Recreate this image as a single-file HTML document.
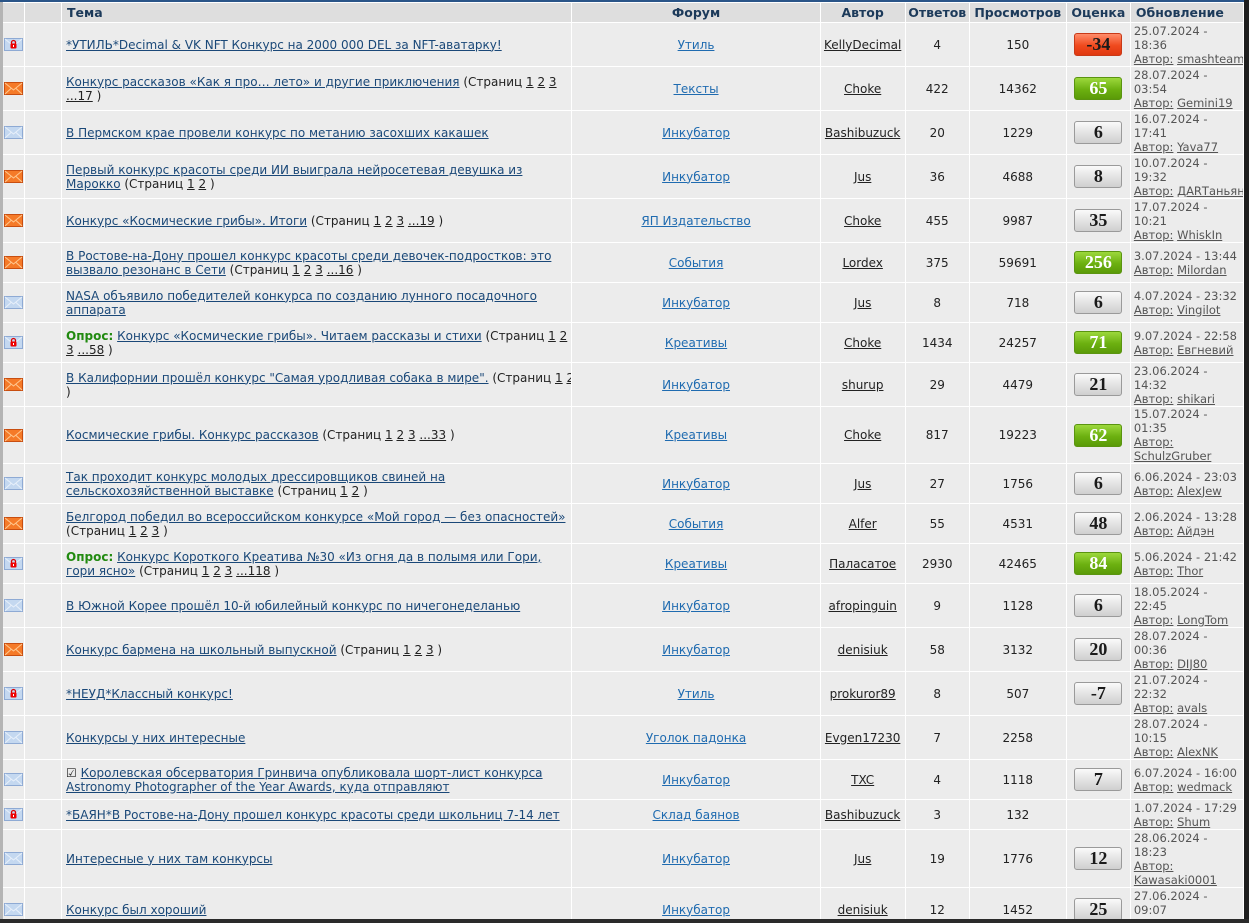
<!DOCTYPE html>
<html><head><meta charset="utf-8"><style>
html,body{margin:0;padding:0;background:#1e1e1e;width:1249px;height:923px;overflow:hidden}
#w{position:absolute;left:0;top:0;width:1244px;height:919px;background:#ececec;border-top:2px solid #2a5588;box-sizing:border-box;overflow:hidden}
table{position:absolute;left:0;top:0;width:1244px;border-collapse:collapse;table-layout:fixed;font-family:"DejaVu Sans","Liberation Sans",sans-serif;font-size:12px;color:#222;border-left:3px solid #b4b4b4}
td,th{border:1px solid #fff;padding:0;vertical-align:middle;white-space:nowrap;overflow:hidden;line-height:14px}
th{background:#dedede;color:#1c3a5a;font-weight:bold;font-size:12.5px;height:19px;text-align:center}
th.t{text-align:left;padding-left:5px}
td{background:#ececec;text-align:center}
td.t{text-align:left;padding-left:4px}
td.u{text-align:left;color:#555;font-size:11.5px;padding-left:3px}
a{color:#222;text-decoration:underline}
a.tp{color:#1a4878}
a.fm{color:#1f6bb0}
td.u a{color:#555}
.op{color:#218a10;font-weight:bold}
.b{display:inline-block;width:48px;height:23px;line-height:23px;border-radius:3px;font:bold 18px "Liberation Serif","DejaVu Serif",serif;text-align:center;box-sizing:border-box}
.r{background:linear-gradient(#ff8c6a,#f04a1e 55%,#e03810);border:1px solid #c83a18;color:#1a1a1a}
.g{background:linear-gradient(#9cd83c,#6cb010 55%,#5a9a08);border:1px solid #5a9410;color:#fff}
.n{background:linear-gradient(#fafafa,#e2e2e2 55%,#cfcfcf);border:1px solid #9a9a9a;color:#1a1a1a}
svg{display:block;margin:0 auto}
</style></head><body><div id="w">
<svg width="0" height="0" style="position:absolute"><defs>
<symbol id="bl" viewBox="0 0 19 13"><rect x=".5" y=".5" width="18" height="12" fill="#c4d8f0" stroke="#8eaad4"/><path d="M1 1L9.5 8L18 1M1 12L7 6.5M18 12L12 6.5" fill="none" stroke="#e8f0fa" stroke-width="1"/></symbol>
<symbol id="or" viewBox="0 0 19 13"><rect x=".5" y=".5" width="18" height="12" fill="#f57a28" stroke="#c84e10"/><path d="M1 1L9.5 8L18 1M1 12L7 6.5M18 12L12 6.5" fill="none" stroke="#ffc890" stroke-width="1"/></symbol>
<symbol id="lk" viewBox="0 0 19 13"><rect x=".5" y=".5" width="18" height="12" fill="#c4d8f0" stroke="#8eaad4"/><path d="M1 1L9.5 8L18 1" fill="none" stroke="#e8f0fa"/><path d="M7.5 6V4.5a2 2 0 0 1 4 0V6" fill="none" stroke="#d00" stroke-width="1.3"/><rect x="6.5" y="5.5" width="6" height="5" rx="1" fill="#e00"/><rect x="9" y="7" width="1" height="2" fill="#fff"/></symbol>
</defs></svg>
<table>
<colgroup><col style="width:23px"><col style="width:37px"><col style="width:510px"><col style="width:248px"><col style="width:85px"><col style="width:64px"><col style="width:97px"><col style="width:64px"><col style="width:113px"></colgroup>
<tr><th></th><th></th><th class="t">Тема</th><th>Форум</th><th>Автор</th><th>Ответов</th><th>Просмотров</th><th>Оценка</th><th class="t">Обновление</th></tr>
<tr style="height:44px"><td><svg width="19" height="13"><use href="#lk"/></svg></td><td></td><td class="t"><a class="tp">*УТИЛЬ*Decimal &amp; VK NFT Конкурс на 2000 000 DEL за NFT-аватарку!</a></td><td><a class="fm">Утиль</a></td><td><a>KellyDecimal</a></td><td>4</td><td>150</td><td><span class="b r">-34</span></td><td class="u">25.07.2024 -<br>18:36<br><a>Автор:</a> <a>smashteam</a></td></tr>
<tr style="height:44px"><td><svg width="19" height="13"><use href="#or"/></svg></td><td></td><td class="t"><a class="tp">Конкурс рассказов «Как я про… лето» и другие приключения</a> (Страниц <a>1</a> <a>2</a> <a>3</a><br><a>...17</a> )</td><td><a class="fm">Тексты</a></td><td><a>Choke</a></td><td>422</td><td>14362</td><td><span class="b g">65</span></td><td class="u">28.07.2024 -<br>03:54<br><a>Автор:</a> <a>Gemini19</a></td></tr>
<tr style="height:44px"><td><svg width="19" height="13"><use href="#bl"/></svg></td><td></td><td class="t"><a class="tp">В Пермском крае провели конкурс по метанию засохших какашек</a></td><td><a class="fm">Инкубатор</a></td><td><a>Bashibuzuck</a></td><td>20</td><td>1229</td><td><span class="b n">6</span></td><td class="u">16.07.2024 -<br>17:41<br><a>Автор:</a> <a>Yava77</a></td></tr>
<tr style="height:44px"><td><svg width="19" height="13"><use href="#or"/></svg></td><td></td><td class="t"><a class="tp">Первый конкурс красоты среди ИИ выиграла нейросетевая девушка из<br>Марокко</a> (Страниц <a>1</a> <a>2</a> )</td><td><a class="fm">Инкубатор</a></td><td><a>Jus</a></td><td>36</td><td>4688</td><td><span class="b n">8</span></td><td class="u">10.07.2024 -<br>19:32<br><a>Автор:</a> <a>ДАRТаньян</a></td></tr>
<tr style="height:44px"><td><svg width="19" height="13"><use href="#or"/></svg></td><td></td><td class="t"><a class="tp">Конкурс «Космические грибы». Итоги</a> (Страниц <a>1</a> <a>2</a> <a>3</a> <a>...19</a> )</td><td><a class="fm">ЯП Издательство</a></td><td><a>Choke</a></td><td>455</td><td>9987</td><td><span class="b n">35</span></td><td class="u">17.07.2024 -<br>10:21<br><a>Автор:</a> <a>WhiskIn</a></td></tr>
<tr style="height:40px"><td><svg width="19" height="13"><use href="#or"/></svg></td><td></td><td class="t"><a class="tp">В Ростове-на-Дону прошел конкурс красоты среди девочек-подростков: это<br>вызвало резонанс в Сети</a> (Страниц <a>1</a> <a>2</a> <a>3</a> <a>...16</a> )</td><td><a class="fm">События</a></td><td><a>Lordex</a></td><td>375</td><td>59691</td><td><span class="b g">256</span></td><td class="u">3.07.2024 - 13:44<br><a>Автор:</a> <a>Milordan</a></td></tr>
<tr style="height:40px"><td><svg width="19" height="13"><use href="#bl"/></svg></td><td></td><td class="t"><a class="tp">NASA объявило победителей конкурса по созданию лунного посадочного<br>аппарата</a></td><td><a class="fm">Инкубатор</a></td><td><a>Jus</a></td><td>8</td><td>718</td><td><span class="b n">6</span></td><td class="u">4.07.2024 - 23:32<br><a>Автор:</a> <a>Vingilot</a></td></tr>
<tr style="height:40px"><td><svg width="19" height="13"><use href="#lk"/></svg></td><td></td><td class="t"><span class="op">Опрос:</span> <a class="tp">Конкурс «Космические грибы». Читаем рассказы и стихи</a> (Страниц <a>1</a> <a>2</a><br><a>3</a> <a>...58</a> )</td><td><a class="fm">Креативы</a></td><td><a>Choke</a></td><td>1434</td><td>24257</td><td><span class="b g">71</span></td><td class="u">9.07.2024 - 22:58<br><a>Автор:</a> <a>Евгневий</a></td></tr>
<tr style="height:44px"><td><svg width="19" height="13"><use href="#or"/></svg></td><td></td><td class="t"><a class="tp">В Калифорнии прошёл конкурс "Самая уродливая собака в мире".</a> (Страниц <a>1</a> <a>2</a><br>)</td><td><a class="fm">Инкубатор</a></td><td><a>shurup</a></td><td>29</td><td>4479</td><td><span class="b n">21</span></td><td class="u">23.06.2024 -<br>14:32<br><a>Автор:</a> <a>shikari</a></td></tr>
<tr style="height:57px"><td><svg width="19" height="13"><use href="#or"/></svg></td><td></td><td class="t"><a class="tp">Космические грибы. Конкурс рассказов</a> (Страниц <a>1</a> <a>2</a> <a>3</a> <a>...33</a> )</td><td><a class="fm">Креативы</a></td><td><a>Choke</a></td><td>817</td><td>19223</td><td><span class="b g">62</span></td><td class="u">15.07.2024 -<br>01:35<br><a>Автор:</a><br><a>SchulzGruber</a></td></tr>
<tr style="height:40px"><td><svg width="19" height="13"><use href="#bl"/></svg></td><td></td><td class="t"><a class="tp">Так проходит конкурс молодых дрессировщиков свиней на<br>сельскохозяйственной выставке</a> (Страниц <a>1</a> <a>2</a> )</td><td><a class="fm">Инкубатор</a></td><td><a>Jus</a></td><td>27</td><td>1756</td><td><span class="b n">6</span></td><td class="u">6.06.2024 - 23:03<br><a>Автор:</a> <a>AlexJew</a></td></tr>
<tr style="height:40px"><td><svg width="19" height="13"><use href="#or"/></svg></td><td></td><td class="t"><a class="tp">Белгород победил во всероссийском конкурсе «Мой город — без опасностей»</a><br>(Страниц <a>1</a> <a>2</a> <a>3</a> )</td><td><a class="fm">События</a></td><td><a>Alfer</a></td><td>55</td><td>4531</td><td><span class="b n">48</span></td><td class="u">2.06.2024 - 13:28<br><a>Автор:</a> <a>Айдэн</a></td></tr>
<tr style="height:40px"><td><svg width="19" height="13"><use href="#lk"/></svg></td><td></td><td class="t"><span class="op">Опрос:</span> <a class="tp">Конкурс Короткого Креатива №30 «Из огня да в полымя или Гори,<br>гори ясно»</a> (Страниц <a>1</a> <a>2</a> <a>3</a> <a>...118</a> )</td><td><a class="fm">Креативы</a></td><td><a>Паласатое</a></td><td>2930</td><td>42465</td><td><span class="b g">84</span></td><td class="u">5.06.2024 - 21:42<br><a>Автор:</a> <a>Thor</a></td></tr>
<tr style="height:44px"><td><svg width="19" height="13"><use href="#bl"/></svg></td><td></td><td class="t"><a class="tp">В Южной Корее прошёл 10-й юбилейный конкурс по ничегонеделанью</a></td><td><a class="fm">Инкубатор</a></td><td><a>afropinguin</a></td><td>9</td><td>1128</td><td><span class="b n">6</span></td><td class="u">18.05.2024 -<br>22:45<br><a>Автор:</a> <a>LongTom</a></td></tr>
<tr style="height:44px"><td><svg width="19" height="13"><use href="#or"/></svg></td><td></td><td class="t"><a class="tp">Конкурс бармена на школьный выпускной</a> (Страниц <a>1</a> <a>2</a> <a>3</a> )</td><td><a class="fm">Инкубатор</a></td><td><a>denisiuk</a></td><td>58</td><td>3132</td><td><span class="b n">20</span></td><td class="u">28.07.2024 -<br>00:36<br><a>Автор:</a> <a>DIJ80</a></td></tr>
<tr style="height:44px"><td><svg width="19" height="13"><use href="#lk"/></svg></td><td></td><td class="t"><a class="tp">*НЕУД*Классный конкурс!</a></td><td><a class="fm">Утиль</a></td><td><a>prokuror89</a></td><td>8</td><td>507</td><td><span class="b n">-7</span></td><td class="u">21.07.2024 -<br>22:32<br><a>Автор:</a> <a>avals</a></td></tr>
<tr style="height:44px"><td><svg width="19" height="13"><use href="#bl"/></svg></td><td></td><td class="t"><a class="tp">Конкурсы у них интересные</a></td><td><a class="fm">Уголок падонка</a></td><td><a>Evgen17230</a></td><td>7</td><td>2258</td><td></td><td class="u">28.07.2024 -<br>10:15<br><a>Автор:</a> <a>AlexNK</a></td></tr>
<tr style="height:40px"><td><svg width="19" height="13"><use href="#bl"/></svg></td><td></td><td class="t">☑ <a class="tp">Королевская обсерватория Гринвича опубликовала шорт-лист конкурса<br>Astronomy Photographer of the Year Awards, куда отправляют</a></td><td><a class="fm">Инкубатор</a></td><td><a>TXC</a></td><td>4</td><td>1118</td><td><span class="b n">7</span></td><td class="u">6.07.2024 - 16:00<br><a>Автор:</a> <a>wedmack</a></td></tr>
<tr style="height:30px"><td><svg width="19" height="13"><use href="#lk"/></svg></td><td></td><td class="t"><a class="tp">*БАЯН*В Ростове-на-Дону прошел конкурс красоты среди школьниц 7-14 лет</a></td><td><a class="fm">Склад баянов</a></td><td><a>Bashibuzuck</a></td><td>3</td><td>132</td><td></td><td class="u">1.07.2024 - 17:29<br><a>Автор:</a> <a>Shum</a></td></tr>
<tr style="height:58px"><td><svg width="19" height="13"><use href="#bl"/></svg></td><td></td><td class="t"><a class="tp">Интересные у них там конкурсы</a></td><td><a class="fm">Инкубатор</a></td><td><a>Jus</a></td><td>19</td><td>1776</td><td><span class="b n">12</span></td><td class="u">28.06.2024 -<br>18:23<br><a>Автор:</a><br><a>Kawasaki0001</a></td></tr>
<tr style="height:44px"><td><svg width="19" height="13"><use href="#bl"/></svg></td><td></td><td class="t"><a class="tp">Конкурс был хороший</a></td><td><a class="fm">Инкубатор</a></td><td><a>denisiuk</a></td><td>12</td><td>1452</td><td><span class="b n">25</span></td><td class="u">27.06.2024 -<br>09:07<br><a>Автор:</a> <a>x</a></td></tr>
</table></div>
<div style="position:absolute;left:0;top:919px;width:1249px;height:4px;background:#2a2a2a"></div>
</body></html>
